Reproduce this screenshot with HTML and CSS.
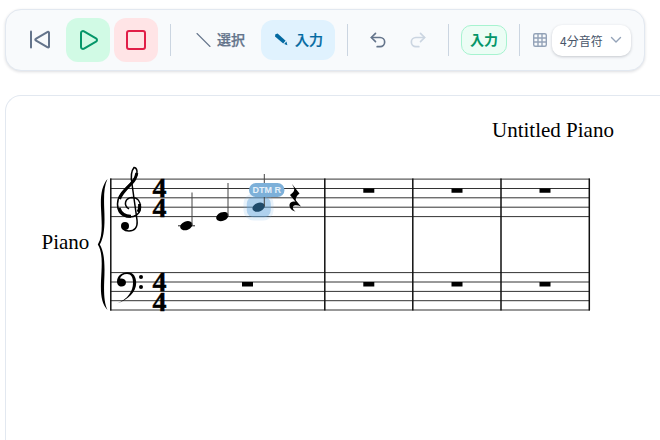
FILE: index.html
```html
<!DOCTYPE html>
<html lang="ja">

<head>
    <meta charset="UTF-8">
    <title>Untitled Piano</title>
    <link rel="stylesheet" href="styles.css">
</head>

<body>
    <div class="page">
        <div class="toolbar">
            <div class="group">
                <button class="btn btn-square">
                    <svg class="icon-24" viewBox="0 0 24 24" fill="none" stroke="#64748b" stroke-width="2" stroke-linecap="round" stroke-linejoin="round">
                        <path d="M3 3.5v16"/>
                        <path d="M21 4.5v14.2a.8.8 0 0 1-1.3.6l-12-7a.8.8 0 0 1 0-1.4l12-7a.8.8 0 0 1 1.3.6z"/>
                    </svg>
                </button>
                <button class="btn btn-square btn-play">
                    <svg class="icon-24" viewBox="0 0 24 24" fill="none" stroke="#059669" stroke-width="2" stroke-linecap="round" stroke-linejoin="round">
                        <path d="M5 5a2 2 0 0 1 3.008-1.728l11.997 6.998a2 2 0 0 1 .003 3.458l-12 7A2 2 0 0 1 5 19z"/>
                    </svg>
                </button>
                <button class="btn btn-square btn-stop">
                    <svg class="icon-24" viewBox="0 0 24 24" fill="none" stroke="#e11d48" stroke-width="2" stroke-linecap="round" stroke-linejoin="round">
                        <rect x="3" y="3" width="18" height="18" rx="2"/>
                    </svg>
                </button>
            </div>
            <span class="divider"></span>
            <div class="group">
                <button class="btn btn-text">
                    <svg class="icon-16" viewBox="0 0 16 16" fill="none" stroke="#64748b" stroke-width="1.1" stroke-linecap="round">
                        <path d="M2 1.5 15 14.5"/>
                    </svg>
                    <span class="btn-label">選択</span>
                </button>
                <button class="btn btn-text btn-active">
                    <svg class="icon-16" viewBox="0 0 16 16" fill="#0369a1">
                        <path d="M2.4 2.2 4.6 1.6 12.6 8.8 10.2 11.4 2 4.4z"/>
                        <path d="M11.2 12 13.4 9.6 14.4 13.2z"/>
                    </svg>
                    <span class="btn-label">入力</span>
                </button>
            </div>
            <span class="divider"></span>
            <div class="group">
                <button class="btn btn-history">
                    <svg class="icon-20" viewBox="0 0 24 24" fill="none" stroke="#64748b" stroke-width="2" stroke-linecap="round" stroke-linejoin="round">
                        <path d="M9 14 4 9l5-5"/>
                        <path d="M4 9h10.5a5.5 5.5 0 0 1 0 11H11"/>
                    </svg>
                </button>
                <button class="btn btn-history">
                    <svg class="icon-20" viewBox="0 0 24 24" fill="none" stroke="#cbd5e1" stroke-width="2" stroke-linecap="round" stroke-linejoin="round">
                        <path d="m15 14 5-5-5-5"/>
                        <path d="M20 9H9.5a5.5 5.5 0 0 0 0 11H13"/>
                    </svg>
                </button>
            </div>
            <span class="divider"></span>
            <span class="mode-badge">入力</span>
            <span class="divider"></span>
            <div class="group">
                <svg class="icon-16" viewBox="0 0 16 16" fill="none" stroke="#94a3b8" stroke-width="1.4">
                    <rect x="1.7" y="1.7" width="12.6" height="12.6" rx="1.5"/>
                    <path d="M1.7 6h12.6M1.7 10h12.6M6 1.7v12.6M10 1.7v12.6"/>
                </svg>
                <div class="select">
                    <span>4分音符</span>
                    <svg class="icon-14" viewBox="0 0 14 14" fill="none" stroke="#94a3b8" stroke-width="1.4" stroke-linecap="round" stroke-linejoin="round">
                        <path d="M2.5 4.5 7 9l4.5-4.5"/>
                    </svg>
                </div>
            </div>
        </div>

        <div class="score-card">
            <svg class="score" viewBox="6 96 654 344" width="654" height="344">
                <text class="score-title" x="492" y="137">Untitled Piano</text>
                <text class="score-part" x="41.5" y="249">Piano</text>

                <!-- 五線 -->
                <path class="staff" d="M110 179.1H590M110 188.5H590M110 197.8H590M110 207.2H590M110 216.6H590"/>
                <path class="staff" d="M110 272.6H590M110 282H590M110 291.4H590M110 300.7H590M110 310H590"/>

                <!-- 小節線 -->
                <path class="bar" d="M110.8 178.6V310.5M324.8 178.6V310.5M412.8 178.6V310.5M501 178.6V310.5M589.3 178.6V310.5"/>

                <!-- ブレース -->
                <path d="M107.5 179C101.5 186 100.5 196 101 208C101.8 224 103 236 97.8 244.5C103 253 101.8 265 101 281C100.5 295 101.5 303 107.5 310C104 303 103.8 292 104.2 281C105 265 104.5 252 99.8 244.5C104.5 237 105 224 104.2 208C103.8 196 104 186 107.5 179Z"/>

                <!-- ト音記号 -->
                <path class="clef" d="M129 209C123 205 125 198 132 197.5C138 197.5 140.5 202 140.5 207C140.5 214 135 217 129 217C121 217 117.5 211 117.5 204C117.5 195 125 189 131 183C135 179 137.5 176 137 171C136.5 168 135 167.5 134 167.5C132 170 130.5 176 132 184L137 220C138 228 134 231 129 231C126 231 124 230 123 229"/>
                <path class="clef-thick" d="M119.5 199C121.5 193 127 188 131 184C134 181 136 178 136.8 173"/>
                <path class="clef-thick" d="M119 208C121 214 126 216.3 131 216.2M139.6 204C139.8 208 139.5 210 138 212"/>
                <circle cx="125" cy="226" r="4"/>

                <!-- ヘ音記号 -->
                <path d="M117 303.5C128 299 133 291 133 283C133 277 131 274 127 274C123.5 274 120.8 276 120 278.5C123 278 126 279.5 126 282.5C126 285 124 286.5 121.5 286.5C119 286.5 117 284.5 117 281.5C117 276 122 272.3 127.5 272.3C133.5 272.3 136.2 277 136.2 283C136.2 292 128 300 117 303.5Z"/>
                <circle cx="141" cy="277" r="2"/>
                <circle cx="141" cy="287" r="2"/>

                <!-- 拍子 -->
                <text class="time-sig"><tspan x="152.5" y="197">4</tspan><tspan x="152.5" y="216.5">4</tspan></text>
                <text class="time-sig"><tspan x="152.5" y="291">4</tspan><tspan x="152.5" y="310.5">4</tspan></text>

                <!-- 音符 -->
                <path class="ledger" d="M178 225.8H195"/>
                <ellipse class="head" cx="186.3" cy="225.7" rx="6.4" ry="4.3" transform="rotate(-22 186.3 225.7)"/>
                <path class="stem" d="M192 225V192.5"/>
                <ellipse class="head" cx="222.3" cy="216.6" rx="6.4" ry="4.3" transform="rotate(-22 222.3 216.6)"/>
                <path class="stem" d="M228 216V183"/>

                <rect class="note-glow" x="243.5" y="193.5" width="30" height="27" rx="10"/>
                <rect class="note-mark" x="246.8" y="196.7" width="24" height="20.5" rx="7"/>
                <ellipse class="head head-current" cx="258.6" cy="207.2" rx="6.4" ry="4.3" transform="rotate(-22 258.6 207.2)"/>
                <path class="stem" d="M264.3 206.5V174"/>
                <rect class="cursor-tag" x="249" y="183" width="35.5" height="14" rx="7"/>
                <text class="cursor-label" x="266.7" y="193.2">DTM R</text>

                <!-- 休符 -->
                <path d="M292 184L299.5 193.5C296.5 196 295 198.5 296 200.5L301 206.5C297 204.8 294 205 293 206.8C292.4 208 293.2 210 295.5 211.7C291.5 210.5 288.8 207.5 289.6 204.3C290.4 201.8 293 201 295.5 201.8L290 195C292.6 192.8 294.2 191.5 294.2 189.5C294.2 187.5 293 186 292 184Z"/>
                <path d="M363.3 188.5h11v4.3h-11zM451.5 188.5h11v4.3h-11zM539.5 188.5h11v4.3h-11z"/>
                <path d="M242 282h11v4.6h-11zM363.3 282h11v4.6h-11zM451.5 282h11v4.6h-11zM539.5 282h11v4.6h-11z"/>
            </svg>
        </div>
    </div>
</body>

</html>
```

FILE: styles.css
```css
* {
    margin: 0;
    padding: 0;
    box-sizing: border-box;
}

html,
body {
    height: 100%;
    overflow: hidden;
    background: #fff;
}

body {
    font-family: "Noto Sans CJK JP", "Noto Sans", sans-serif;
}

.page {
    padding: 9px 15px 0 5px;
}

.toolbar {
    display: flex;
    align-items: center;
    height: 62px;
    padding: 0 12px;
    background: #f8fafc;
    border: 1px solid #e2e8f0;
    border-radius: 16px;
    box-shadow: 0 1px 3px rgba(15, 23, 42, 0.14);
}

.group {
    display: flex;
    align-items: center;
    gap: 4px;
}

.divider {
    width: 1px;
    height: 32px;
    margin: 0 12px;
    background: #cbd5e1;
}

.btn {
    display: flex;
    align-items: center;
    justify-content: center;
    border: 0;
    background: transparent;
    font-family: inherit;
}

.btn-square {
    width: 44px;
    height: 44px;
    border-radius: 12px;
}

.btn-play {
    background: #d1fae5;
}

.btn-stop {
    background: #ffe4e6;
}

.btn-text {
    gap: 6px;
    width: 74px;
    height: 40px;
    border-radius: 12px;
    font-size: 14px;
    font-weight: 500;
    color: #64748b;
    -webkit-text-stroke: 0.25px;
}

.btn-label {
    margin-bottom: 2px;
}

.btn-active {
    background: #e0f2fe;
    color: #0369a1;
}

.btn-history {
    width: 36px;
    height: 40px;
}

.icon-24 {
    width: 24px;
    height: 24px;
}

.icon-20 {
    width: 20px;
    height: 20px;
}

.icon-16 {
    width: 16px;
    height: 16px;
}

.icon-14 {
    width: 14px;
    height: 14px;
}

.mode-badge {
    width: 46px;
    height: 30px;
    border: 1px solid #a7f3d0;
    border-radius: 10px;
    background: #ecfdf5;
    color: #059669;
    font-size: 14px;
    font-weight: 700;
    line-height: 26px;
    text-align: center;
}

.select {
    display: flex;
    align-items: center;
    justify-content: space-between;
    width: 79px;
    height: 31px;
    padding: 0 8px;
    border-radius: 10px;
    background: #fff;
    box-shadow: 0 1px 3px rgba(15, 23, 42, 0.22);
    color: #475569;
    font-size: 12px;
}

.score-card {
    width: 655px;
    height: 345px;
    margin-top: 24px;
    border: 1px solid #e2e8f0;
    border-right: 0;
    border-bottom: 0;
    border-radius: 16px 0 0 0;
    background: #fff;
}

.score {
    display: block;
}

.score-title,
.score-part {
    font-family: "Liberation Serif", serif;
    font-size: 21px;
    fill: #000;
}

.staff {
    fill: none;
    stroke: #333;
    stroke-width: 1;
}

.bar {
    fill: none;
    stroke: #111;
    stroke-width: 1.5;
}

.clef {
    fill: none;
    stroke: #000;
    stroke-width: 1.5;
}

.clef-thick {
    fill: none;
    stroke: #000;
    stroke-width: 3;
}

.time-sig {
    font-family: "Liberation Serif", serif;
    font-size: 28px;
    font-weight: 700;
    stroke: #000;
    stroke-width: 0.4;
}

.ledger {
    stroke: #222;
    stroke-width: 1;
}

.stem {
    stroke: #444;
    stroke-width: 1;
}

.head-current {
    fill: #1e4a6b;
}

.note-glow {
    fill: rgba(125, 185, 232, 0.18);
}

.note-mark {
    fill: rgba(96, 165, 219, 0.42);
}

.cursor-tag {
    fill: #7db0d9;
}

.cursor-label {
    font-family: "Liberation Sans", sans-serif;
    font-size: 9px;
    font-weight: 700;
    text-anchor: middle;
    fill: #e6f1fa;
}
```
